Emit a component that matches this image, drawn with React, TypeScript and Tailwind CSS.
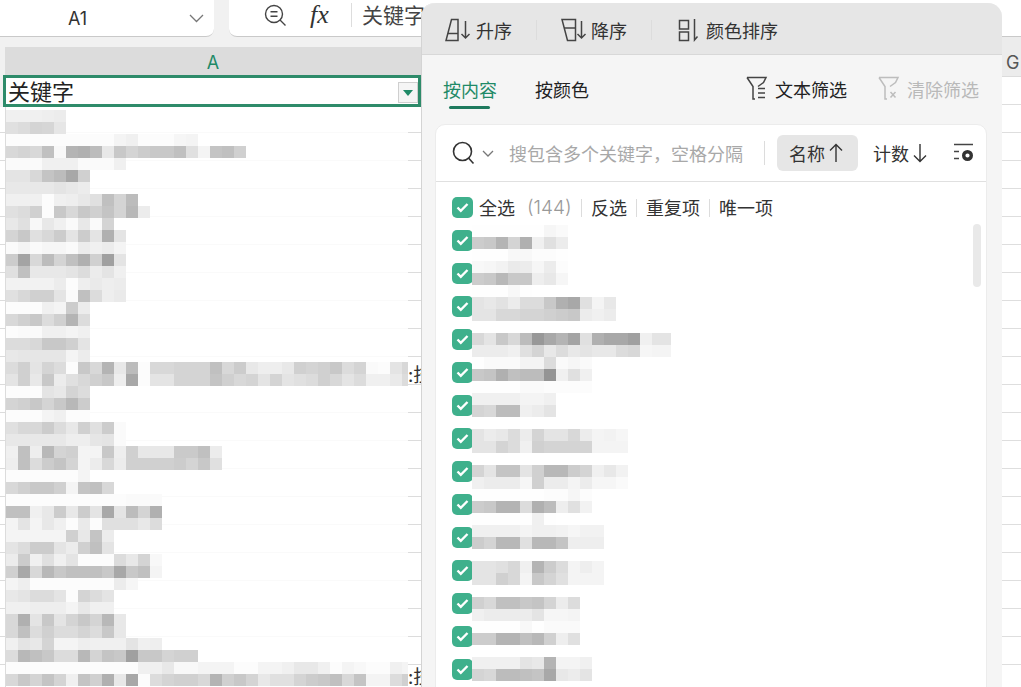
import React from "react";

const sheetRows = `f0 f0 f0 ee ec
e0 dc d4 d6 e6
fc fc fc fc fc fc fc fc fc f4 f0 fc fc fc f6 f4
d8 d4 d8 c0 f8 b4 b0 bc e8 c8 d4 cc c8 c8 c0 e0 f4 c4 c0 d0
fa fa fa f0 f0 f0 fa fa fa f0
e4 e4 d8 c4 bc a8 d0
e8 e8 e8 e8 e4 e8 ec
f0 f0 f0 fc f0 ee e8 e0 c0 d4 bc
e0 dc d0 fc c8 d8 c8 d0 c4 d4 b8 ec
e8 e0 f8 e8 f0 fa e8 fa d4
d4 c8 e0 d8 cc e4 cc e4 b0 e4
fa f4 fa f6 f6 fa ec f0 ec f4
cc a4 d8 bc d4 c0 b0 d0 a0 e4
e0 c0 e8 e8 e8 e4 dc ec e4 f0
f2 f2 f2 f2 ec fc ee ea ee ec
e0 d8 d0 d0 e4 fa c0 dc ee ea
fc fc fc f0 f4 cc ec
d8 d0 c8 dc d0 b4 dc
fc fa fa f0 f0 f4 f0
dc dc d8 c8 c8 d0 e4
e8 e6 e6 e6 e6 f4 ec
dc d0 e4 d4 dc fc c8 d8 b4 e8 bc fc d8 d8 d4 d4 d4 c0 d8 cc e8 ee ee e8 d0 d4 d0 c8 dc d4 fa fc e4 d8
e4 d0 e8 c8 ec e0 d8 d0 c8 ee a8 fc e4 e4 d4 d4 d4 c4 d0 d8 d4 e4 d4 e4 e0 dc d0 d8 e4 dc f0 f0 ea dc
fc fc fc e4 e8 d4 dc
d4 d0 c8 d4 c8 b8 cc
fc fc fc f4 f0 fc fc
e0 d8 d8 cc dc e8 d0 e0 cc fa
e8 e8 e8 e8 e8 ee ee e6 e4 fa
f0 c0 ee b8 d4 d0 f4 f4 c8 ee d0 e8 e8 e8 ca ca c0 ec
ee c0 dc cc c4 d4 f4 ec d8 ec d0 d0 d0 d0 cc d4 c8 e0
fc fc fc fc fc fc f4
d8 d0 c8 c8 d0 f4 c4 c0 d8
fc fc fc fc fc fc fc fc fc fc fa fa fa
c0 c0 f0 e8 cc e8 cc e4 a8 e4 bc d4 b0
f4 e4 f4 e8 f0 fc ea fc e0 e0 e0 e8 dc
f4 f4 f4 f4 f4 d0 e8 c4 ec
e4 dc cc cc e4 ec d0 c0 e4
ec cc f0 e0 f0 e4 fc fc fc dc e8 d4 f8
d0 a8 d8 b8 c8 c0 c0 c0 c8 a8 c8 c0 f4
f4 ee fc fc fc fc fc fc fc ec f6
e8 e4 dc dc e4 fc d4 dc e4
f0 f0 ee ee ee f4 e8 f0 f0
d8 b0 e4 c8 e4 d4 c8 d4 b8 e8
d8 c0 dc d0 dc dc d4 dc c8 e8
f0 e4 e8 d4 f4 f4 ee f0 f0 f0 e4 f0 ee
dc b8 c0 c8 dc dc b8 d4 c4 c8 a0 c8 c8 d4 d0 d0
fc fc fc fc fc fc fc fc fc fc fc f0 f0 e8 f8 f8 f4 f4 f4 fc fc f4 f4 f0 e8 e8 f0 fc f4 f8 fc fc f0 f4
d8 c8 d4 c4 d4 f0 c4 d0 b0 e8 a8 fc dc d4 d0 d0 d8 b4 d0 c8 d4 e8 e0 e0 d4 cc c8 c0 d8 c4 f4 f4 dc d0`;

const listRows = `fe fe fe fe fe fe f6 fa
cc c8 b4 d4 b0 f0 e0 ec
fe fe fe f8 f8 fc fc fe
f8 f6 f2 ea ec f6 ec fc
cc c8 b8 c8 c8 ee e8 f6
fe fe fe f8 fe
e4 e8 e2 ec dc dc c8 b0 a8 e0 f4 e8
e4 e4 d8 d8 d4 d4 d0 cc c8 ec f0 ec
ff
d8 e4 c8 d8 bc 98 a8 b4 a4 e0 b0 a8 a8 a0 f0 e4 e4
ec ec ec f0 e0 d4 e8 dc e8 e4 e8 e8 dc d8 f6 f4 f4
fe fa fa fa f4 f4 dc fa f6 fa
c8 c4 b0 c0 bc bc 94 f0 e0 f0
fe fe fe fe fa fa fc fc fc fc
f0 f0 f0 f0 f4 f4 f0
d4 d8 bc bc f0 ec e4
ff
e4 ec e8 dc ec d4 e4 e4 d8 ec f4 f2 f6
e4 e4 d4 dc f0 d0 d4 d4 d4 d4 f4 f4 f4
ff
d4 e4 c4 c4 e4 d0 b8 b8 cc d4 f0 e8 f2
f0 ec ec ec f6 d0 ec ec f4 ec f6 f6 fa
fe fe fe fe fe fe fc fc f6 fc
cc c8 b4 b4 dc b0 bc ee e0 f2
fe fe fe fe fe f0 fe
f0 f0 f0 f0 f4 f0 f0 f2 f6 f2 f2
cc d4 b8 b8 e0 b8 b8 c4 ee ee ee
ff
e4 e4 e0 d8 f0 b4 cc dc f4 ee f4
e4 e4 d0 d8 f4 c8 d4 e0 f4 f4 f4
ff
d0 d8 c0 c0 c8 c4 d4 ec dc
f0 ec ec ec ec e4 f6 f6 f4
fe fe fe fe f8 fe fa fa fa
cc cc b4 b4 c0 b8 d0 ee e0
ff
f0 f0 f0 f0 e4 e8 b4 f4 f4 f0
d4 d8 bc bc c0 c4 a8 e8 ec e4`;

function Mosaic({ data, className, wash, clip }: { data: string; className: string; wash?: number; clip?: number }) {
  const rows = data.split("\n").map((r) => r.trim().split(" "));
  const cols = clip ?? wash ?? Math.max(...rows.map((r) => r.length)) * 12;
  const h = rows.length * 12;
  return (
    <svg width={cols} height={h} className={className} shapeRendering="crispEdges">
      {wash ? <rect x={0} y={0} width={wash} height={h} fill="#fff" fillOpacity={0.85} /> : null}
      {rows.flatMap((r, y) =>
        r.map((c, x) => <rect key={`${x}-${y}`} x={x * 12} y={y * 12} width={12} height={12} fill={`#${c}${c}${c}`} />)
      )}
    </svg>
  );
}

const Check = () => (
  <div className="w-[21px] h-[21px] rounded-[5px] bg-[#3fb08c] flex items-center justify-center shrink-0">
    <svg width="13" height="11" viewBox="0 0 13 11" fill="none">
      <path d="M1.5 5.5 4.8 8.8 11.5 2" stroke="#fff" strokeWidth="2.4" />
    </svg>
  </div>
);

const Sep = ({ cls }: { cls: string }) => <div className={`w-px bg-[#dcdcdc] ${cls}`} />;

const AscIcon = () => (
  <svg width="26" height="24" viewBox="0 0 26 24" fill="none" stroke="#444" strokeWidth="1.5">
    <path d="M6.5 1.5h6.5v21H1z" />
    <path d="M3 15.5h10" />
    <path d="M20.5 3v17M16.5 16l4 4 4-4" />
  </svg>
);
const DescIcon = () => (
  <svg width="26" height="24" viewBox="0 0 26 24" fill="none" stroke="#444" strokeWidth="1.5">
    <path d="M1 1.5h13.5v21H6.5z" />
    <path d="M3 10h11" />
    <path d="M20.5 3v17M16.5 16l4 4 4-4" />
  </svg>
);
const ColorIcon = () => (
  <svg width="22" height="24" viewBox="0 0 22 24" fill="none" stroke="#444" strokeWidth="1.5">
    <rect x="1.5" y="2.5" width="9" height="8.5" />
    <rect x="1.5" y="14" width="9" height="8.5" />
    <path d="M16.5 1v21l3-3.5" />
  </svg>
);
const FilterIcon = ({ c, x }: { c: string; x?: boolean }) => (
  <svg width="22" height="24" viewBox="0 0 22 24" fill="none" stroke={c} strokeWidth="1.5">
    <path d="M1 1.5h19L17.5 6.5 12 10.5M1 1.5 7 10.5v12.5h2" />
    {x ? (
      <path d="M12.5 16l5 5.5M17.5 16l-5 5.5" />
    ) : (
      <path d="M12 12.5h7M12 17h7M12 21.5h7" />
    )}
  </svg>
);

const Tiny = ({ cls }: { cls: string }) => (
  <div className={`absolute left-[408px] w-[13px] h-[22px] overflow-hidden text-[19px] leading-[22px] text-[#333] ${cls}`}>
    <span className="whitespace-nowrap">:技</span>
  </div>
);

const items = Array.from({ length: 14 });

export default function App() {
  return (
    <div className="relative w-[1021px] h-[687px] overflow-hidden bg-[#f1f1f1] flex flex-col font-['Noto_Sans_CJK_SC','Noto_Sans',sans-serif] text-[#333]">
      {/* top bar */}
      <div className="flex h-[37px] shrink-0">
        <div className="w-[214px] bg-white border-b border-[#c9c9c9] rounded-br-[8px] flex items-center pt-[1px]">
          <span className="ml-[68px] w-[22px] text-[18px] font-['Inter',sans-serif] text-[#333]">A1</span>
          <svg className="ml-[99px]" width="15" height="9" viewBox="0 0 15 9" fill="none" stroke="#777" strokeWidth="1.3">
            <path d="M1 1l6.5 6.5L14 1" />
          </svg>
        </div>
        <div className="w-[15px]" />
        <div className="flex-1 bg-white border-b border-[#c9c9c9] rounded-bl-[8px] flex items-center pb-[6px]">
          <svg className="ml-[35px]" width="23" height="23" viewBox="0 0 23 23" fill="none" stroke="#444" strokeWidth="1.4">
            <circle cx="10" cy="10" r="8.5" />
            <path d="M16 16l5.5 5.5M6.5 7.8h7M6.5 12.2h7" />
          </svg>
          <span className="ml-[23px] text-[26px] leading-[30px] italic font-['Liberation_Serif',serif] text-[#333] w-[31px]">fx</span>
          <div className="w-px h-[24px] bg-[#dddddd] ml-[10px]" />
          <span className="ml-[10px] text-[21px] text-[#444] whitespace-nowrap">关键字</span>
        </div>
      </div>

      {/* sheet */}
      <div className="flex flex-1 min-h-0">
        <div className="w-[421px] pt-[10px] flex flex-col shrink-0">
          <div className="ml-[5px] h-[28px] bg-[#dcdcdc] flex items-center justify-center pt-[3px] text-[18px] font-['Inter',sans-serif] text-[#1f8a67]">
            A
          </div>
          <div className="ml-[3px] h-[32px] bg-white border-[3px] border-[#2e8b6a] flex items-center pl-[2px] text-[22px] text-[#222] relative shrink-0">
            <span className="-mt-[2px]">关键字</span>
            <div className="absolute right-0 top-[4px] w-[20px] h-[21px] bg-[#f5f5f5] border border-[#cfcfcf] flex items-center justify-center">
              <div className="w-0 h-0 border-x-[5px] border-x-transparent border-t-[6px] border-t-[#1f8a67]" />
            </div>
          </div>
          <div className="flex flex-col bg-white">
            {Array.from({ length: 22 }).map((_, i) => (
              <div key={i} className={`border-b border-[#dcdcdc] ${i === 0 ? "h-[26px]" : "h-[28px]"} shrink-0`} />
            ))}
          </div>
        </div>
        <div className="flex-1" />
        <div className="w-[19px] shrink-0 flex flex-col bg-white">
          <div className="h-[40px] bg-[#ececec] border-b border-[#dcdcdc] flex items-center pl-[4px] text-[18px] font-['Inter',sans-serif] text-[#555] shrink-0 pt-[11px]">
            G
          </div>
          {Array.from({ length: 22 }).map((_, i) => (
            <div key={i} className="h-[28px] border-b border-[#dedede] shrink-0" />
          ))}
        </div>
      </div>

      {/* left vertical gutter line over rows */}
      <div className="absolute left-[5px] top-[107px] bottom-0 w-px bg-[#dcdcdc]" />
      <Mosaic data={sheetRows} wash={402} className="absolute left-[6px] top-[110px]" />
      <Tiny cls="top-[363px]" />
      <Tiny cls="top-[665px]" />

      {/* filter popup */}
      <div className="absolute left-[421px] top-[3px] w-[581px] h-[700px] bg-[#f5f5f5] rounded-t-[14px] border-l border-[#d4d4d4] flex flex-col">
        <div className="h-[52px] shrink-0 bg-[#e6e6e6] rounded-t-[14px] border-b border-[#d8d8d8] flex items-center pl-[23px] pt-[3px] text-[18px] text-[#333]">
          <AscIcon />
          <span className="ml-[5px]">升序</span>
          <Sep cls="h-[20px] ml-[24px]" />
          <div className="ml-[24px]"><DescIcon /></div>
          <span className="ml-[4px]">降序</span>
          <Sep cls="h-[20px] ml-[24px]" />
          <div className="ml-[26px]"><ColorIcon /></div>
          <span className="ml-[6px]">颜色排序</span>
        </div>

        <div className="h-[69px] shrink-0 flex items-start pt-[21px] pl-[21px] pr-[23px] text-[18px] leading-[26px]">
          <div className="flex flex-col">
            <span className="text-[#1f8a67]">按内容</span>
            <div className="mt-[4px] ml-[6px] w-[41px] h-[3px] rounded-full bg-[#1f7a5e]" />
          </div>
          <span className="ml-[38px] text-[#222]">按颜色</span>
          <div className="ml-auto"><FilterIcon c="#444" /></div>
          <span className="ml-[7px] text-[#222]">文本筛选</span>
          <div className="ml-[31px]"><FilterIcon c="#bdbdbd" x /></div>
          <span className="ml-[7px] text-[#b9b9b9]">清除筛选</span>
        </div>

        <div className="ml-[13px] w-[552px] flex-1 bg-white rounded-t-[10px] border border-[#ececec] flex flex-col">
          <div className="h-[57px] shrink-0 border-b border-[#e0e0e0] flex items-center pl-[16px] text-[18px]">
            <svg width="23" height="24" viewBox="0 0 23 24" fill="none" stroke="#333" strokeWidth="1.6">
              <circle cx="10.5" cy="10.5" r="9" />
              <path d="M16.5 17l5 5.5" />
            </svg>
            <svg className="ml-[7px]" width="12" height="7" viewBox="0 0 12 7" fill="none" stroke="#777" strokeWidth="1.3">
              <path d="M1 1l5 5 5-5" />
            </svg>
            <span className="ml-[15px] text-[#a8a8a8] whitespace-nowrap">搜包含多个关键字，空格分隔</span>
            <Sep cls="h-[24px] ml-[21px]" />
            <div className="ml-[12px] w-[81px] h-[36px] rounded-[6px] bg-[#e6e6e6] flex items-center pl-[12px] text-[#333]">
              名称
              <svg className="ml-[4px]" width="14" height="20" viewBox="0 0 14 20" fill="none" stroke="#333" strokeWidth="1.4">
                <path d="M7 19V1.5M1 7.5l6-6 6 6" />
              </svg>
            </div>
            <span className="ml-[15px] text-[#333]">计数</span>
            <svg className="ml-[4px]" width="14" height="20" viewBox="0 0 14 20" fill="none" stroke="#333" strokeWidth="1.4">
              <path d="M7 1v17.5M1 12.5l6 6 6-6" />
            </svg>
            <svg className="ml-[26px]" width="22" height="21" viewBox="0 0 22 21" fill="none">
              <path d="M1 1.5h19M1 8.5h5M1 15.5h5" stroke="#444" strokeWidth="1.4" />
              <circle cx="14.5" cy="12.5" r="3.8" stroke="#333" strokeWidth="3.4" />
            </svg>
          </div>

          <div className="relative flex-1 pt-[9px] pl-[16px] flex flex-col">
            <div className="h-[33px] shrink-0 flex items-center text-[18px] leading-[24px]">
              <Check />
              <span className="ml-[6px] -mt-[1px] text-[#333]">全选</span>
              <span className="ml-[12px] mt-[1px] text-[#999] text-[19px] w-[45px] whitespace-nowrap font-['Inter',sans-serif] font-light">(144)</span>
              <Sep cls="h-[18px] ml-[9px]" />
              <span className="ml-[9px] -mt-[1px]">反选</span>
              <Sep cls="h-[18px] ml-[9px]" />
              <span className="ml-[9px] -mt-[1px]">重复项</span>
              <Sep cls="h-[18px] ml-[9px]" />
              <span className="ml-[9px] -mt-[1px]">唯一项</span>
            </div>
            {items.map((_, i) => (
              <div key={i} className="h-[33px] shrink-0 flex items-center">
                <Check />
              </div>
            ))}
            <Mosaic data={listRows} clip={199} className="absolute left-[36px] top-[43px]" />
            <div className="absolute left-[537px] top-[42px] w-[8px] h-[63px] rounded-full bg-[#e9e9e9]" />
          </div>
        </div>
      </div>
    </div>
  );
}
